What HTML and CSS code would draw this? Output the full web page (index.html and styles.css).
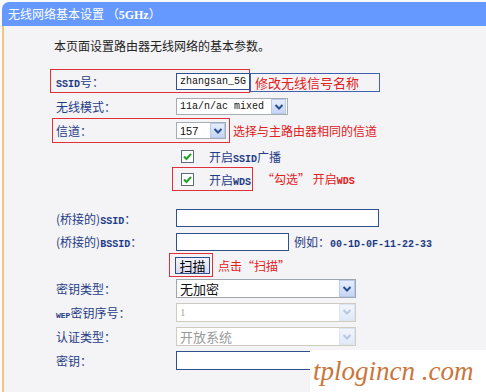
FILE: index.html
```html
<!DOCTYPE html>
<html>
<head>
<meta charset="utf-8">
<link rel="stylesheet" href="styles.css">
</head>
<body>
<div class="panel">
  <div class="title">无线网络基本设置 （<span class="tl">5GHz</span>）</div>
  <div class="main">
    <div class="desc">本页面设置路由器无线网络的基本参数。</div>

    <div class="row r1">
      <div class="pair hl">
        <div class="label"><span class="en">SSID</span>号：</div>
        <div class="input w-ssid"><span class="en val">zhangsan_5G</span></div>
      </div>
      <div class="note blue-box">修改无线信号名称</div>
    </div>

    <div class="row r2">
      <div class="pair">
        <div class="label">无线模式：</div>
        <div class="select w-mode"><span class="en val">11a/n/ac mixed</span><span class="arrow"><svg width="10" height="8" viewBox="0 0 10 8"><path d="M1.5 2 L5 5.5 L8.5 2" fill="none" stroke="#2D4E8E" stroke-width="2"/></svg></span></div>
      </div>
    </div>

    <div class="row r3">
      <div class="pair hl hl3">
        <div class="label">信道：</div>
        <div class="select w-chan"><span class="num">157</span><span class="arrow"><svg width="10" height="8" viewBox="0 0 10 8"><path d="M1.5 2 L5 5.5 L8.5 2" fill="none" stroke="#2D4E8E" stroke-width="2"/></svg></span></div>
      </div>
      <div class="note">选择与主路由器相同的信道</div>
    </div>

    <div class="row r4">
      <div class="spacer"></div>
      <div class="chk-wrap">
        <svg class="chk" width="13" height="13" viewBox="0 0 13 13"><rect x="0.5" y="0.5" width="12" height="12" fill="#fff" stroke="#5C6C7C"/><path d="M3 6.5 L5.5 9 L10 3.8" fill="none" stroke="#21A121" stroke-width="2"/></svg>
        <span class="chk-text">开启<span class="en">SSID</span>广播</span>
      </div>
    </div>

    <div class="row r5">
      <div class="spacer s2"></div>
      <div class="chk-wrap hl hl5">
        <svg class="chk" width="13" height="13" viewBox="0 0 13 13"><rect x="0.5" y="0.5" width="12" height="12" fill="#fff" stroke="#5C6C7C"/><path d="M3 6.5 L5.5 9 L10 3.8" fill="none" stroke="#21A121" stroke-width="2"/></svg>
        <span class="chk-text">开启<span class="en">WDS</span></span>
      </div>
      <div class="note n5">“勾选” 开启<span class="en">WDS</span></div>
    </div>

    <div class="row r6">
      <div class="label">(桥接的)<span class="en">SSID</span>：</div>
      <div class="input w-bssid-name"></div>
    </div>

    <div class="row r7">
      <div class="label">(桥接的)<span class="en">BSSID</span>：</div>
      <div class="input w-bssid"></div>
      <div class="example">例如：<span class="en">00-1D-0F-11-22-33</span></div>
    </div>

    <div class="row r8">
      <div class="spacer s3"></div>
      <div class="btn-box">
        <div class="btn">扫描</div>
      </div>
      <div class="note n8">点击“扫描”</div>
    </div>

    <div class="row r9">
      <div class="label">密钥类型：</div>
      <div class="select w-key"><span class="val big">无加密</span><span class="arrow"><svg width="10" height="8" viewBox="0 0 10 8"><path d="M1.5 2 L5 5.5 L8.5 2" fill="none" stroke="#2D4E8E" stroke-width="2"/></svg></span></div>
    </div>

    <div class="row r10">
      <div class="label"><span class="en sm">WEP</span>密钥序号：</div>
      <div class="select w-key disabled"><span class="val dis-num">1</span><span class="arrow"><svg width="10" height="8" viewBox="0 0 10 8"><path d="M1.5 2 L5 5.5 L8.5 2" fill="none" stroke="#B8C8E0" stroke-width="2"/></svg></span></div>
    </div>

    <div class="row r11">
      <div class="label">认证类型：</div>
      <div class="select w-key disabled"><span class="val big dis">开放系统</span><span class="arrow"><svg width="10" height="8" viewBox="0 0 10 8"><path d="M1.5 2 L5 5.5 L8.5 2" fill="none" stroke="#B8C8E0" stroke-width="2"/></svg></span></div>
    </div>

    <div class="row r12">
      <div class="label">密钥：</div>
      <div class="input w-key"></div>
    </div>
  </div>
</div>
<div class="watermark">tplogincn .com</div>
</body>
</html>
```
FILE: styles.css
```css
html, body {
  margin: 0;
  padding: 0;
  background: #fbfbfd;
  width: 486px;
  height: 392px;
  overflow: hidden;
  font-family: "Noto Sans CJK SC", sans-serif;
}
.panel {
  margin: 2px 0 0 2px;
}
.title {
  height: 24px;
  line-height: 24px;
  background: #6699FF;
  border-top-left-radius: 7px;
  color: #fff;
  font-size: 12px;
  padding-left: 6px;
}
.title .tl {
  font-family: "Liberation Serif", serif;
  font-weight: bold;
  font-size: 12px;
}
.main {
  border-left: 2px solid #F2C47C;
  background: #F4F4F6;
  height: 366px;
  box-sizing: border-box;
  padding: 14px 0 0 46px;
}
.desc {
  font-size: 12px;
  line-height: 12px;
  color: #222;
  margin-left: 4px;
  margin-bottom: 17px;
}
.row {
  display: flex;
  align-items: center;
  height: 24px;
  box-sizing: border-box;
  white-space: nowrap;
}
.pair {
  display: flex;
  align-items: center;
  height: 100%;
  box-sizing: border-box;
  border: 1px solid transparent;
}
.hl {
  border: 1px solid #E0303A;
}
.label {
  width: 126px;
  padding-left: 6px;
  box-sizing: border-box;
  font-size: 12px;
  color: #1F3D85;
  flex: none;
}
.pair .label { width: 125px; padding-left: 5px; }
.en {
  font-family: "Liberation Mono", monospace;
  font-size: 10px;
}
.label .en, .chk-text .en, .example .en, .note .en { font-weight: bold; }
.en.sm { font-size: 8px; font-weight: bold; }
.input, .select {
  box-sizing: border-box;
  background: #fff;
  display: flex;
  align-items: center;
  flex: none;
}
.input {
  border: 1px solid #2F4F8F;
  height: 18px;
}
.select {
  border: 1px solid #A5ACB2;
  height: 17px;
  justify-content: space-between;
  padding-left: 3px;
}
.val { color: #111; }
.num { font-size: 11px; font-family: "Liberation Sans", sans-serif; color: #111; }
.arrow {
  width: 15px;
  height: 100%;
  box-sizing: border-box;
  border: 1px solid #B7C9EC;
  background: linear-gradient(#E6EEFC, #C5D5F5);
  display: flex;
  align-items: center;
  justify-content: center;
}
.w-ssid { width: 74px; height: 17px; padding-left: 3px; }
.w-mode { width: 112px; padding-right: 1px; }
.w-mode .val { margin-right: 4px; }
.w-chan { width: 50px; }
.w-bssid-name { width: 203px; }
.w-bssid { width: 113px; }
.w-key { width: 180px; height: 19px; }
.select.w-key { height: 19px; border-color: #9EA6AE; }
.select.w-key .arrow { width: 16px; }
.big { font-size: 13px; }
.disabled { border-color: #CFCBBE !important; }
.disabled .arrow { background: linear-gradient(#F1F5FC, #E1E9F8); border-color: #DCE5F4; }
.dis { color: #9a9a9a; }
.dis-num { color: #aaa; font-family: "Liberation Serif", serif; font-size: 11px; }

.note {
  color: #E2201C;
  font-size: 12px;
  margin-left: 3px;
}
.blue-box {
  border: 1px solid #4060B0;
  height: 19px;
  box-sizing: border-box;
  width: 130px;
  margin-left: 0;
  padding-left: 4px;
  line-height: 17px;
  font-size: 13px;
  align-self: flex-start;
  margin-top: 4px;
}
.r1 { height: 24px; }
.r1 .pair { height: 24px; width: 200px; }
.r2 { height: 25px; padding-top: 2px; }
.r3 { height: 25px; }
.hl3 { margin-left: 2px; width: 178px; }
.hl3 .label { width: 123px; padding-left: 3px; }
.r3 .note { margin-left: 3px; }
.r4 { height: 21px; margin-top: 3px; }
.spacer { width: 131px; flex: none; }
.spacer.s2 { width: 122px; }
.spacer.s3 { width: 119px; }
.chk-wrap {
  display: flex;
  align-items: center;
  font-size: 12px;
  color: #1F3D85;
  white-space: nowrap;
}
.chk { flex: none; }
.chk-text { margin-left: 15px; }
.r5 { height: 24px; }
.hl5 {
  height: 24px;
  box-sizing: border-box;
  padding: 0 1px 0 8px;
}
.n5 { margin-left: 9px; margin-top: -2px; }
.r6 { height: 24px; margin-top: 15px; }
.r7 { height: 23px; }
.example {
  font-size: 12px;
  color: #1F3D85;
  margin-left: 5px;
}
.r8 { height: 24px; }
.btn-box {
  border: 1px solid #E0303A;
  height: 24px;
  width: 44px;
  box-sizing: border-box;
  display: flex;
  align-items: center;
  padding-left: 5px;
}
.btn {
  width: 35px;
  height: 17px;
  box-sizing: border-box;
  border: 1px solid #2F4F8F;
  background: linear-gradient(#F4F4FF, #D8DAF4);
  font-size: 13px;
  line-height: 15px;
  text-align: center;
  color: #000;
}
.n8 { margin-left: 5px; }
.r9 { height: 23px; }
.r10 { height: 24px; }
.r11 { height: 25px; }
.r12 { height: 23px; }
.r12 .input { height: 19px; }
.watermark {
  position: absolute;
  left: 310px;
  top: 350px;
  width: 176px;
  height: 42px;
  background: #fff;
  color: #C8763C;
  font-family: "Liberation Serif", serif;
  font-style: italic;
  font-size: 27px;
  line-height: 42px;
  padding-left: 3px;
  box-sizing: border-box;
  white-space: nowrap;
  overflow: hidden;
}
```
